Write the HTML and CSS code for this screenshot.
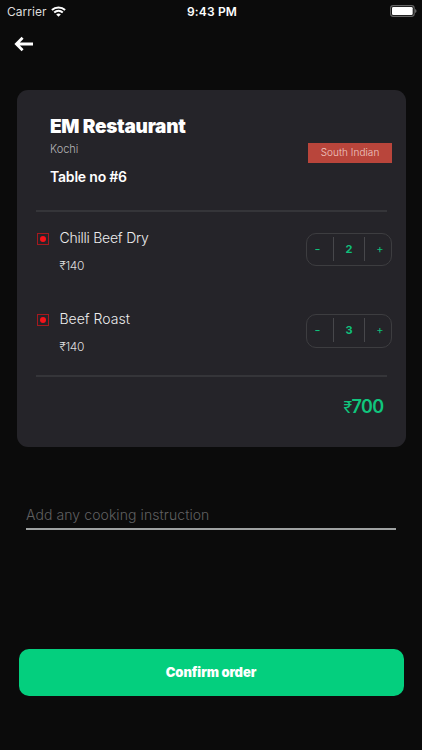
FILE: index.html
```html
<!DOCTYPE html>
<html lang="en">
<head>
<meta charset="utf-8">
<meta name="viewport" content="width=device-width, initial-scale=1">
<title>Confirm order</title>
<link rel="stylesheet" href="styles.css">
</head>
<body>
<main class="screen">
  <div class="status">
    <div class="carrier">Carrier
      <svg width="15" height="11" viewBox="0 0 15 11" fill="none" stroke="#fff" stroke-width="2"><path d="M.9 4.1C4.5.7 10.5.7 14.1 4.1M3.2 6.5C5.7 4.3 9.3 4.3 11.8 6.5"/><path d="M7.5 10.7 5.2 8.4C6.5 7.3 8.5 7.3 9.8 8.4Z" fill="#fff" stroke="none"/></svg>
    </div>
    <span class="time">9:43 PM</span>
    <svg class="battery" width="27" height="12" viewBox="0 0 27 12"><rect x=".6" y=".6" width="23.6" height="10.8" rx="2.6" fill="none" stroke="#666" stroke-width="1.1"/><rect x="2" y="2" width="20.7" height="8" rx="1.3" fill="#fff"/><path d="M25.2 4c1.7.6 1.7 3.4 0 4Z" fill="#777"/></svg>
  </div>
  <header class="nav">
    <svg width="20" height="16" viewBox="0 0 20 16" fill="none" stroke="#fff" stroke-width="2.8"><path d="M19 8H3M8.6 1.8 2.4 8l6.2 6.2"/></svg>
  </header>
  <section class="card">
    <div class="head">
      <div>
        <h1 class="name">EM Restaurant</h1>
        <p class="city">Kochi</p>
        <p class="table">Table no #6</p>
      </div>
      <span class="tag">South Indian</span>
    </div>
    <div class="items">
      <div class="item">
        <span class="veg"></span>
        <div class="info"><p class="dish dish-long">Chilli Beef Dry</p><p class="price">₹140</p></div>
        <div class="stepper"><span class="minus">-</span><b>2</b><span class="plus">+</span></div>
      </div>
      <div class="item">
        <span class="veg"></span>
        <div class="info"><p class="dish">Beef Roast</p><p class="price">₹140</p></div>
        <div class="stepper"><span class="minus">-</span><b>3</b><span class="plus">+</span></div>
      </div>
    </div>
    <p class="total"><span class="rupee">₹</span>700</p>
  </section>
  <div class="note">Add any cooking instruction</div>
  <div class="confirm">Confirm order</div>
</main>
</body>
</html>
```
FILE: styles.css
```css
* { box-sizing: border-box; margin: 0; padding: 0; }
body {
  background: #0b0b0b;
  color: #fff;
  font-family: Inter, "Noto Sans", sans-serif;
}
.screen { width: 422px; height: 750px; overflow: hidden; }
.status {
  display: grid;
  grid-template-columns: 1fr auto 1fr;
  align-items: center;
  height: 22px;
  padding: 0 5px 0 7px;
}
.carrier { display: flex; align-items: center; gap: 4.5px; font-size: 12px; letter-spacing: .05px; color: #ddd; }
.time { font-size: 12px; font-weight: 600; letter-spacing: .15px; }
.battery { justify-self: end; }
.nav { height: 68px; padding: 14px 0 0 14px; }
.nav svg { display: block; }
.card {
  width: 389px;
  height: 356.5px;
  margin-left: 16.5px;
  padding: 0 13.5px 0 19px;
  border-radius: 11px;
  background: #252429;
}
.head {
  display: flex;
  justify-content: space-between;
  height: 122px;
  padding: 26px 0 0 14.5px;
}
.name { font-size: 19px; line-height: 22px; font-weight: 900; letter-spacing: -.28px; }
.city { margin-top: 3px; font-size: 11px; line-height: 16px; color: #b5b5b7; font-weight: 300; }
.table { margin-top: 11px; font-size: 14px; line-height: 18px; font-weight: 600; letter-spacing: -.2px; }
.tag {
  width: 84px;
  height: 20px;
  margin-top: 26.5px;
  background: #b9453b;
  color: #f0c9c4;
  font-size: 10px;
  line-height: 19px;
  font-weight: 300;
  letter-spacing: .05px;
  text-align: center;
}
.items {
  height: 167px;
  margin-right: 5.5px;
  margin-top: -2px;
  border-top: 2px solid #353539;
  border-bottom: 2px solid #353539;
}
.item {
  display: flex;
  height: 81.5px;
  margin-right: -5.5px;
  padding-top: 20.5px;
}
.veg {
  display: grid;
  place-items: center;
  width: 12px;
  height: 12px;
  margin: 0 10.5px 0 1.5px;
  border: 1px solid #a5191e;
}
.veg::before { content: ""; width: 6px; height: 6px; border-radius: 50%; background: #f5131a; }
.info { flex: 1; }
.dish { font-size: 14px; line-height: 18px; font-weight: 300; color: #eee; margin-top: -4px; }
.dish-long { letter-spacing: -.24px; }
.price { margin-top: 11px; font-size: 12px; line-height: 16px; font-weight: 300; letter-spacing: -.35px; color: #ddd; }
.stepper {
  display: grid;
  grid-template-columns: 26px 32px 26px;
  align-items: center;
  width: 86px;
  height: 33.5px;
  padding: 3px 0 4px;
  border: 1px solid #3d3d40;
  border-radius: 10px;
  color: #0fbf7a;
  font-size: 11px;
  line-height: 24px;
  text-align: center;
}
.stepper b { font-weight: 700; border: solid #47474b; border-width: 0 1px; }
.minus { padding-right: 5px; font-size: 13px; }
.plus { padding-left: 4px; }
.total {
  padding-right: 8.5px;
  margin-top: 17.5px;
  font-size: 18px;
  line-height: 24px;
  font-weight: 600;
  letter-spacing: -.6px;
  text-align: right;
  color: #10c67d;
}
.rupee { font-weight: 400; font-size: 16px; }
.note {
  width: 370.5px;
  height: 30px;
  margin: 53px 0 0 25.5px;
  padding-top: 5px;
  padding-left: .5px;
  border-bottom: 2px solid #9fa2a2;
  color: #606061;
  font-size: 14px;
  line-height: 20px;
  font-weight: 300;
  letter-spacing: .08px;
}
.confirm {
  width: 385px;
  height: 47px;
  margin: 119px 0 0 18.5px;
  border-radius: 10px;
  background: #04cf7e;
  font-size: 13px;
  line-height: 46px;
  font-weight: 900;
  letter-spacing: -.08px;
  text-align: center;
}
```
